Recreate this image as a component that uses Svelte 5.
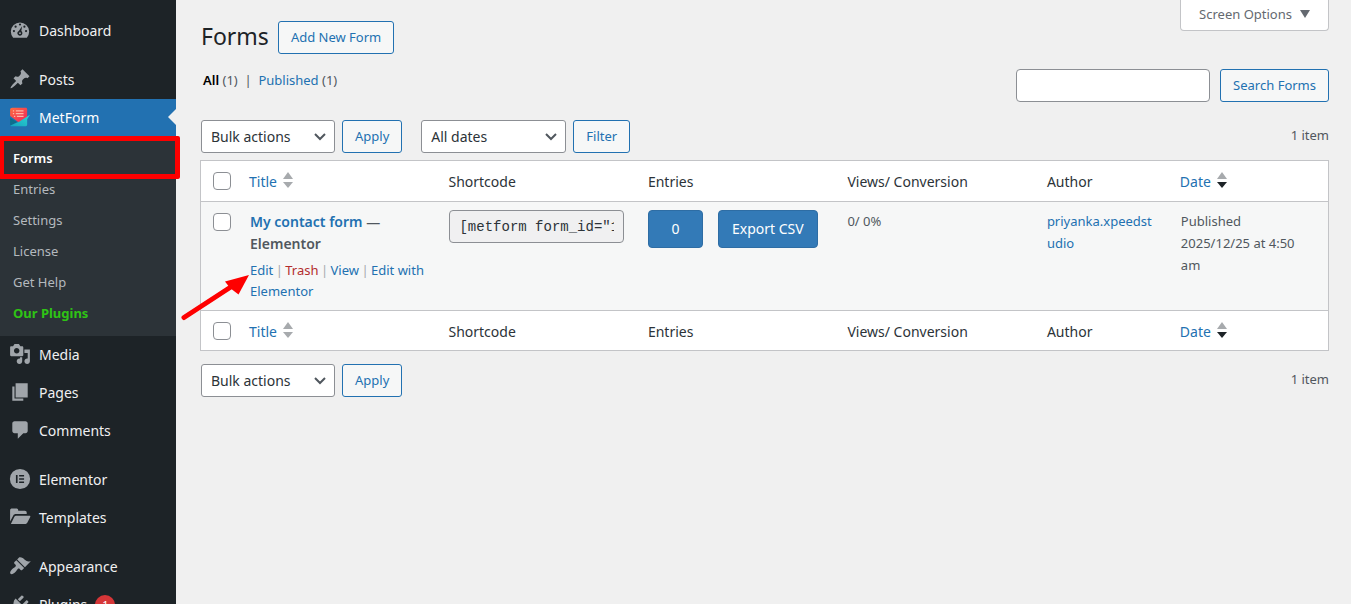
<script>
  const icons = {
    posts: 'M10.44 3.02l1.82-1.82 6.36 6.35-1.83 1.82c-1.05-.68-2.48-.57-3.41.36l-.75.75c-.92.93-1.04 2.35-.35 3.41l-1.83 1.82-2.41-2.41-2.8 2.79c-.42.42-3.38 2.71-3.8 2.29s1.86-3.39 2.28-3.81l2.79-2.79L4.1 9.36l1.83-1.82c1.05.69 2.48.57 3.4-.36l.75-.75c.93-.92 1.05-2.35.36-3.41z',
    media: 'M13 11V4c0-.55-.45-1-1-1h-1.67L9 1H5L3.67 3H2c-.55 0-1 .45-1 1v7c0 .55.45 1 1 1h10c.55 0 1-.45 1-1zM7 4.5c1.38 0 2.5 1.12 2.5 2.5S8.38 9.5 7 9.5 4.5 8.38 4.5 7 5.62 4.5 7 4.5zM14 6h5v10.5c0 1.38-1.12 2.5-2.5 2.5S14 17.88 14 16.5s1.12-2.5 2.5-2.5c.17 0 .34.02.5.05V9h-3V6zm-4 8.05V13h2v3.5c0 1.38-1.12 2.5-2.5 2.5S7 17.88 7 16.5 8.12 14 9.5 14c.17 0 .34.02.5.05z',
    pages: 'M6 15V2h11v13H6zm-1 1h8v2H3V5h2v11z',
    comments: 'M5 2h10c1.1 0 2 .9 2 2v7c0 1.1-.9 2-2 2h-2l-5 5v-5H5c-1.1 0-2-.9-2-2V4c0-1.1.9-2 2-2z',
    elementor: 'M10 .8a9.2 9.2 0 1 0 0 18.4A9.2 9.2 0 0 0 10 .8zM6.3 6.3h1.5v7.4H6.3zM9.2 6.3h4.5v1.5H9.2zM9.2 9.25h4.5v1.5H9.2zM9.2 12.2h4.5v1.5H9.2z',
    templates: 'M1 14V4c0-1 .7-1.7 1.700-1.700h4c1 0 1.700.7 1.700 1.700v.3h6c1 0 1.700.7 1.700 1.700V7.300H6.200c-1 0-1.800.5-2.300 1.300zM1.700 16.300l3.200-6.600c.3-.6.8-.9 1.500-.9h12.200c.7 0 1 .5.7 1.100l-2.700 5.400c-.3.6-.8 1-1.500 1z',
    appearance: 'M14.48 11.06L7.41 3.99l1.5-1.5c.5-.56 2.3-.47 3.51.32 1.21.8 1.43 1.28 2.91 2.1 1.18.64 2.45 1.26 4.45.85zm-.71.71L6.7 4.7 4.93 6.47c-.39.39-.39 1.02 0 1.41l1.06 1.06c.39.39.39 1.03 0 1.42-.6.6-1.43 1.11-2.21 1.69-.35.26-.7.53-1.01.84C1.43 14.23.4 16.08 1.4 17.07c.99 1 2.84-.03 4.18-1.36.31-.31.58-.66.85-1.02.57-.78 1.08-1.61 1.69-2.21.39-.39 1.02-.39 1.41 0l1.06 1.06c.39.39 1.02.39 1.41 0z',
    plugins: 'M13.11 4.36L9.87 7.6 8 5.73l3.24-3.24c.35-.34 1.05-.2 1.56.32.52.51.66 1.21.31 1.55zm-8 1.77l.91-1.12 9.01 9.01-1.19.84c-.71.71-2.63 1.16-3.82 1.16H6.14L4.9 17.26c-.59.59-1.54.59-2.12 0-.59-.58-.59-1.53 0-2.12l1.24-1.24v-3.88c0-1.13.4-3.19 1.09-3.89zm7.26 3.97l3.24-3.24c.34-.35 1.04-.21 1.55.31.52.51.66 1.21.31 1.55l-3.24 3.25z'
  };
  const groups = [
    [{ id: 'dashboard', label: 'Dashboard' }],
    [
      { id: 'posts', label: 'Posts' },
      { id: 'metform', label: 'MetForm', sub: ['Forms', 'Entries', 'Settings', 'License', 'Get Help', 'Our Plugins'] },
      { id: 'media', label: 'Media' },
      { id: 'pages', label: 'Pages' },
      { id: 'comments', label: 'Comments' }
    ],
    [
      { id: 'elementor', label: 'Elementor' },
      { id: 'templates', label: 'Templates' }
    ],
    [
      { id: 'appearance', label: 'Appearance' },
      { id: 'plugins', label: 'Plugins', count: 1 }
    ]
  ];
  const shortcode = '[metform form_id="1204"]';
</script>

{#snippet sorter(active)}
  <svg class="sorter" class:active viewBox="0 0 10 20" aria-hidden="true">
    <path class="up" d="M5 0l5 7H0z" />
    <path class="down" d="M0 10h10l-5 6z" />
  </svg>
{/snippet}

{#snippet picker(id, label, wide)}
  <span class="picker" class:wide>
    <select {id} aria-label={label}><option>{label}</option></select>
    <svg viewBox="0 0 12 8" aria-hidden="true"><path d="M1 1l5 5 5-5" /></svg>
  </span>
{/snippet}

{#snippet headings(place)}
  <tr>
    <th class="check"><input type="checkbox" aria-label="Select all, {place}" /></th>
    <th><a href="#title">Title {@render sorter(false)}</a></th>
    <th>Shortcode</th>
    <th>Entries</th>
    <th>Views/ Conversion</th>
    <th>Author</th>
    <th><a href="#date">Date {@render sorter(true)}</a></th>
  </tr>
{/snippet}

<div class="shell">
  <nav class="side" aria-label="Main menu">
    {#each groups as group}
      <ul>
        {#each group as item}
          <li>
            <a class="item" class:current={item.sub} href="#{item.id}">
              {#if item.id === 'dashboard'}
                <svg viewBox="0 0 20 20" aria-hidden="true">
                  <path d="M3.76 17h12.48A8.300 8.300 0 1 0 3.760 17z" />
                  <g class="cut">
                    <circle cx="10" cy="5" r="1" /><circle cx="6" cy="7" r="1" /><circle cx="14" cy="7" r="1" />
                    <circle cx="4.500" cy="11" r="1" /><circle cx="15.500" cy="11" r="1" />
                    <path d="M11.900 6.500L11.200 11A2.300 2.300 0 1 1 8.900 10.800z" />
                  </g>
                  <circle cx="10" cy="12.900" r=".8" />
                </svg>
              {:else if item.id === 'metform'}
                <svg viewBox="0 0 20 20" aria-hidden="true">
                  <defs>
                    <linearGradient id="sheet" x1="0" y1="0" x2="1" y2="1"><stop stop-color="#ff6a3c" /><stop offset="1" stop-color="#f0255f" /></linearGradient>
                    <linearGradient id="fold" x1="0" y1="1" x2="1" y2="0"><stop stop-color="#14a5bd" /><stop offset="1" stop-color="#2fd5d3" /></linearGradient>
                  </defs>
                  <path fill="url(#sheet)" d="M3 1.500h12c1 0 1.500.5 1.500 1.500v8L9 15 1 9V3.500c0-1.200.8-2 2-2z" />
                  <path stroke="#ffb5a5" stroke-width="1.200" d="M3.500 4.500h1.200M6.200 4.500h7M3.500 7h1.200M6.200 7h7M4.500 9.500h1.200M7.200 9.500h6" />
                  <path fill="#0d6f8d" d="M1 11l6.500 3.500L1 18z" />
                  <path fill="url(#fold)" d="M1 18l8.500-4 9.500-6-2.500 4V17c0 .8-.5 1.300-1.300 1.300H2c-.5 0-.8-.1-1-.3z" />
                </svg>
              {:else}
                <svg viewBox="0 0 20 20" aria-hidden="true"><path fill-rule="evenodd" d={icons[item.id]} /></svg>
              {/if}
              <span>{item.label}</span>
              {#if item.count}<span class="count">{item.count}</span>{/if}
            </a>
            {#if item.sub}
              <ul class="sub">
                {#each item.sub as name, i}
                  <li class:marked={i === 0} class:promo={i === 5}><a href="#{name}">{name}</a></li>
                {/each}
              </ul>
            {/if}
          </li>
        {/each}
      </ul>
    {/each}
  </nav>

  <main>
    <header>
      <h1>Forms</h1>
      <button class="btn">Add New Form</button>
      <button class="screen">Screen Options <svg viewBox="0 0 10 8" aria-hidden="true"><path d="M0 0h10L5 8z" /></svg></button>
    </header>

    <div class="bar views">
      <p><a class="all" href="#all">All</a> (1) &nbsp;|&nbsp; <a href="#published">Published</a> (1)</p>
      <form class="search" onsubmit={(e) => e.preventDefault()}>
        <input type="search" aria-label="Search Forms" />
        <button class="btn">Search Forms</button>
      </form>
    </div>

    <div class="bar nav">
      {@render picker('bulk-top', 'Bulk actions', false)}
      <button class="btn">Apply</button>
      <span class="dates">{@render picker('dates', 'All dates', true)}</span>
      <button class="btn">Filter</button>
      <span class="total">1 item</span>
    </div>

    <table>
      <colgroup>
        <col class="c-check" /><col class="c-main" /><col class="c-main" /><col class="c-main" /><col class="c-main" /><col class="c-author" /><col />
      </colgroup>
      <thead>{@render headings('top')}</thead>
      <tbody>
        <tr>
          <td class="check"><input type="checkbox" aria-label="Select My contact form" /></td>
          <td class="inset">
            <strong><a href="#form">My contact form</a> — Elementor</strong>
            <div class="actions">
              <a href="#edit">Edit</a><i>|</i><a class="trash" href="#trash">Trash</a><i>|</i><a href="#view">View</a><i>|</i><a href="#elementor">Edit with Elementor</a>
              <svg class="pointer" viewBox="0 0 70 48" aria-hidden="true">
                <path class="shaft" d="M4 44.500L50 14.500" />
                <path class="head" d="M69 2L45 8.500l5 6.500 8.500 6.500z" />
              </svg>
            </div>
          </td>
          <td><input class="code" readonly value={shortcode} aria-label="Shortcode" /></td>
          <td><div class="buttons"><a class="fill" href="#entries">0</a><a class="fill" href="#export">Export CSV</a></div></td>
          <td>0/ 0%</td>
          <td class="narrow"><a class="author" href="#author">priyanka.xpeedstudio</a></td>
          <td class="inset narrow">Published<br />2025/12/25 at 4:50 am</td>
        </tr>
      </tbody>
      <tfoot>{@render headings('bottom')}</tfoot>
    </table>

    <div class="bar lower">
      {@render picker('bulk-bottom', 'Bulk actions', false)}
      <button class="btn">Apply</button>
      <span class="total">1 item</span>
    </div>
  </main>
</div>

<style>
  :global(body) { margin: 0; background: #f0f0f0; }
  * { box-sizing: border-box; }
  .shell {
    display: flex;
    height: 100vh;
    overflow: hidden;
    color: #50575e;
    font: 13px/22px "Noto Sans", "Open Sans", sans-serif;
  }
  a { color: #2271b1; text-decoration: none; }
  button, input, select { font-family: inherit; font-size: 13px; margin: 0; }

  .side {
    flex: none;
    width: 176px;
    padding-top: 12px;
    background: #1d2327;
    display: flex;
    flex-direction: column;
    gap: 11px;
  }
  ul { list-style: none; margin: 0; padding: 0; }
  .item {
    position: relative;
    display: flex;
    align-items: center;
    gap: 8px;
    height: 38px;
    padding-left: 9px;
    color: #f0f0f1;
    font-size: 14px;
  }
  .item svg { width: 22px; height: 22px; margin-bottom: 3px; fill: #a0a5aa; flex: none; }
  .item .cut { fill: #1d2327; }
  .current { background: #2271b1; color: #fff; }
  .current::after {
    content: "";
    position: absolute;
    right: 0;
    top: 10px;
    border: 8px solid transparent;
    border-left: 0;
    border-right-color: #f0f0f0;
  }
  .count {
    min-width: 20px;
    height: 20px;
    border-radius: 10px;
    background: #d63638;
    color: #fff;
    font-size: 11px;
    line-height: 20px;
    text-align: center;
  }
  .sub { background: #2c3338; padding: 6px 0 7px; }
  .sub li { position: relative; }
  .sub a { display: block; padding-left: 13px; line-height: 31px; color: #b4b9be; }
  .sub .marked a { color: #fff; font-weight: 600; }
  .sub .promo a { color: #2fc315; font-weight: 700; }
  .marked::after {
    content: "";
    position: absolute;
    inset: -7px -4px -5px -1px;
    border: 5px solid #fe0000;
    border-radius: 2px;
    z-index: 2;
    pointer-events: none;
  }

  main { flex: 1; min-width: 0; padding: 0 22px 0 24px; }
  header { display: flex; align-items: flex-start; gap: 9px; }
  h1 { margin: 20px 0 0; color: #1d2327; font-size: 23px; font-weight: 400; line-height: 32px; }
  header .btn { margin-top: 21px; }
  .btn {
    height: 33px;
    padding: 0 12px 2px;
    border: 1px solid #2271b1;
    border-radius: 3px;
    background: #f6f7f7;
    color: #2271b1;
    white-space: nowrap;
  }
  header, .bar { padding-left: 1px; }
  .screen {
    display: flex;
    align-items: center;
    gap: 8px;
    height: 31px;
    margin-left: auto;
    padding: 0 18px 2px;
    border: 1px solid #c3c4c7;
    border-top: 0;
    border-radius: 0 0 4px 4px;
    background: #fff;
    color: #646970;
  }
  .screen svg { width: 10px; height: 8px; fill: #646970; }

  .bar { display: flex; align-items: center; gap: 7px; }
  .views { justify-content: space-between; align-items: flex-start; margin-top: 15px; }
  .views p { margin: 0; padding-left: 2px; }
  .views .all { color: #000; font-weight: 600; }
  .search { display: flex; gap: 10px; }
  .search input {
    width: 194px;
    height: 33px;
    padding: 0 8px;
    border: 1px solid #8c8f94;
    border-radius: 4px;
    background: #fff;
    appearance: none;
  }
  .nav { margin: 18px 0 7px; }
  .lower { margin-top: 13px; }
  .dates { margin-left: 12px; }
  .total { margin-left: auto; align-self: flex-start; line-height: 30px; }
  .picker { position: relative; display: flex; width: 134px; }
  .picker.wide { width: 145px; }
  .picker select {
    width: 100%;
    height: 33px;
    padding: 0 24px 0 9px;
    border: 1px solid #8c8f94;
    border-radius: 3px;
    background: #fff;
    color: #2c3338;
    font-size: 14px;
    appearance: none;
  }
  .picker svg {
    position: absolute;
    right: 9px;
    top: 13px;
    width: 12px;
    height: 8px;
    fill: none;
    stroke: #50575e;
    stroke-width: 2;
    pointer-events: none;
  }

  table {
    width: 100%;
    table-layout: fixed;
    border: 1px solid #c3c4c7;
    border-spacing: 0;
    background: #fff;
  }
  .c-check { width: 39px; }
  .c-main { width: 17.7%; }
  .c-author { width: 11.8%; }
  th, td { padding: 8px 9px; text-align: left; vertical-align: top; }
  th { padding: 9px 9px 7px; color: #2c3338; font-size: 14px; font-weight: 400; line-height: 24px; }
  thead th { border-bottom: 1px solid #c3c4c7; }
  tfoot th { border-top: 1px solid #c3c4c7; padding-bottom: 6px; }
  th a { display: flex; align-items: center; gap: 6px; }
  .sorter { width: 10px; height: 20px; }
  .sorter path { fill: #a7aaad; }
  .sorter.active .down { fill: #1d2327; }
  tbody tr { background: #f6f7f7; }
  td { height: 108px; }
  td.inset { padding-left: 10px; }
  td.narrow { padding-right: 16px; }
  .check { padding: 11px 0 0 12px; }
  .check input {
    display: block;
    width: 18px;
    height: 18px;
    border: 1px solid #8c8f94;
    border-radius: 4px;
    background: #fff;
    appearance: none;
  }
  strong { display: block; padding-top: 1px; font-size: 14px; font-weight: 600; }
  .actions {
    position: relative;
    margin: 5px -9px 0 0;
    color: #a7aaad;
    line-height: 21px;
  }
  .actions .trash { color: #b32d2e; }
  .actions i { display: inline-block; width: 12px; font-style: normal; text-align: center; }
  .pointer { position: absolute; right: 100%; top: 13px; width: 70px; height: 48px; }
  .shaft { stroke: #fe0000; stroke-width: 5; stroke-linecap: round; }
  .head { fill: #fe0000; }
  .code {
    display: block;
    width: 175px;
    max-width: 100%;
    height: 33px;
    margin-left: 1px;
    padding: 0 9px;
    border: 1px solid #8c8f94;
    border-radius: 4px;
    background: #f0f0f1;
    color: #2c3338;
    font-family: "Liberation Mono", monospace;
    font-size: 14px;
    line-height: 24px;
  }
  .buttons { display: flex; gap: 15px; }
  .fill {
    min-width: 55px;
    padding: 0 13px;
    border: 1px solid #2e6da4;
    border-radius: 4px;
    background: #337ab7;
    color: #fff;
    font-size: 14px;
    line-height: 36px;
    text-align: center;
    white-space: nowrap;
  }
  .author { overflow-wrap: anywhere; }
</style>
